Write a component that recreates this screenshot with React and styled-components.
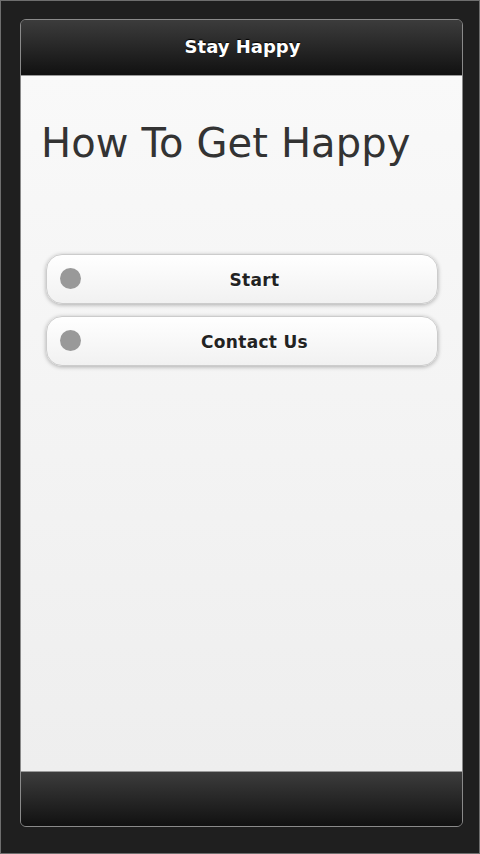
import styled, { createGlobalStyle } from "styled-components"

const GlobalStyle = createGlobalStyle`
    html, body {
        margin: 0;
        padding: 0;
        background: #1f1f1f;
    }
    * {
        box-sizing: border-box;
    }
`

const menu = ["Start", "Contact Us"]

export default function App(){
    return(
        <>
            <GlobalStyle/>
            <Device>
                <Screen>
                    <Header>
                        <HeaderTitle>Stay Happy</HeaderTitle>
                    </Header>
                    <Content>
                        <Title>How To Get Happy</Title>
                        <ButtonList>
                            {menu.map(label => (
                                <MenuButton key={label}>
                                    <Dot/>
                                    <span>{label}</span>
                                </MenuButton>
                            ))}
                        </ButtonList>
                    </Content>
                    <Footer/>
                </Screen>
            </Device>
        </>
    )
}

const Device = styled.div`
    width: 480px;
    height: 854px;
    border: 1px solid #6e6e6e;
    padding: 18px 16px 26px 19px;
    background: #1f1f1f;
    display: flex;
`
const Screen = styled.div`
    flex: 1;
    display: flex;
    flex-direction: column;
    border: 1px solid #8a8a8a;
    border-radius: 6px;
    overflow: hidden;
    font-family: "DejaVu Sans", sans-serif;
`
const Header = styled.div`
    height: 56px;
    display: flex;
    align-items: center;
    justify-content: center;
    background: linear-gradient(#3c3c3c, #111111);
    border-bottom: 1px solid #9a9a9a;
`
const HeaderTitle = styled.h1`
    margin: 0 0 2px 2px;
    font-size: 18px;
    font-weight: bold;
    color: #ffffff;
    text-shadow: 0 -1px 1px #000;
`
const Content = styled.div`
    flex: 1;
    background: linear-gradient(#f9f9f9, #eeeeee);
    padding: 0 24px 0 25px;
`
const Title = styled.h2`
    margin: 39px 0 0 -5px;
    font-size: 40px;
    font-weight: normal;
    line-height: 56px;
    letter-spacing: 0.1px;
    color: #333333;
`
const ButtonList = styled.div`
    margin-top: 83px;
    display: flex;
    flex-direction: column;
    gap: 12px;
`
const MenuButton = styled.div`
    height: 50px;
    position: relative;
    display: flex;
    align-items: center;
    justify-content: center;
    padding: 2px 15px 0 40px;
    border: 1px solid #cccccc;
    border-radius: 16px;
    background: linear-gradient(#ffffff, #f1f1f1);
    box-shadow: 0 1px 4px rgba(0, 0, 0, 0.3);
    font-size: 17px;
    font-weight: bold;
    letter-spacing: 0.3px;
    color: #222222;
    text-shadow: 0 1px 0 #fff;
`
const Dot = styled.i`
    position: absolute;
    left: 13px;
    top: 50%;
    width: 21px;
    height: 21px;
    margin-top: -11px;
    border-radius: 50%;
    background: #999999;
`
const Footer = styled.div`
    height: 55px;
    background: linear-gradient(#3c3c3c, #111111);
    border-top: 1px solid #9a9a9a;
`
